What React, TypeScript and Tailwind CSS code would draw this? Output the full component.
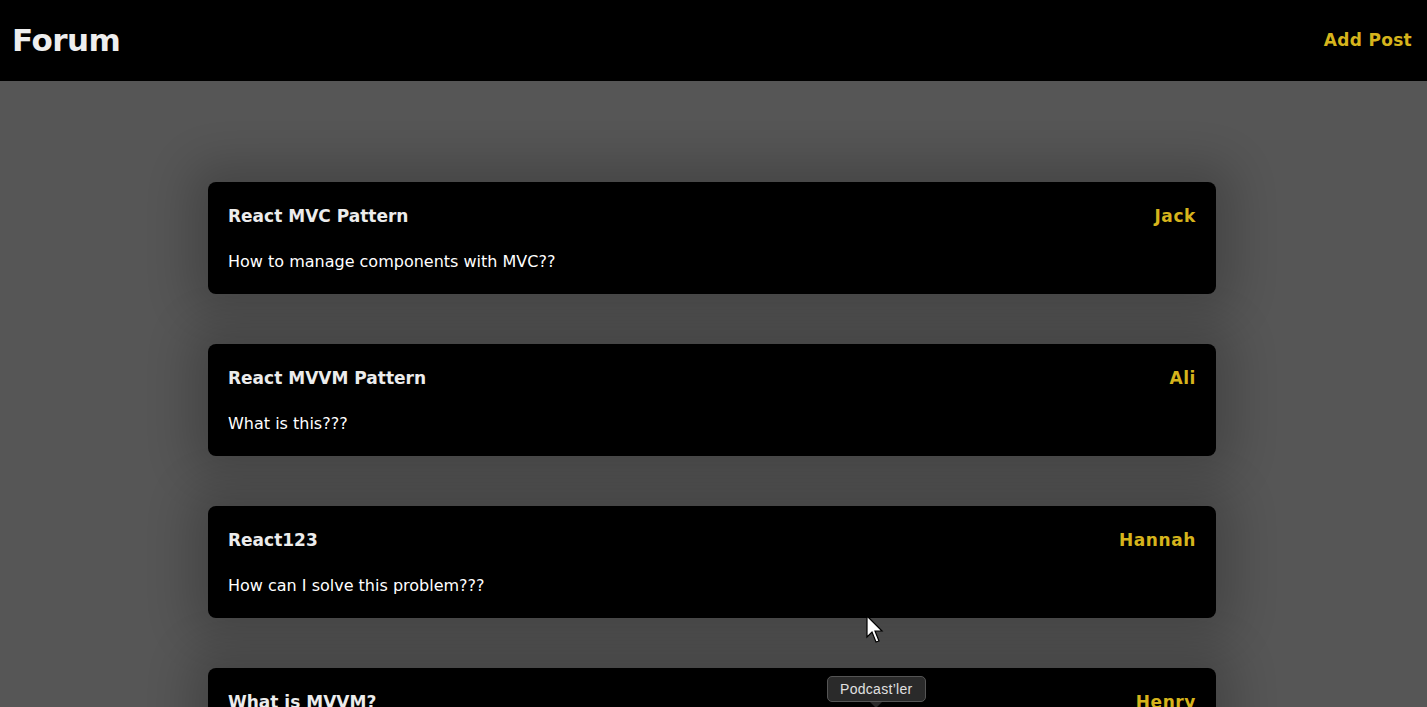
import React from "react";

const posts = [
  { title: "React MVC Pattern", author: "Jack", body: "How to manage components with MVC??" },
  { title: "React MVVM Pattern", author: "Ali", body: "What is this???" },
  { title: "React123", author: "Hannah", body: "How can I solve this problem???" },
  { title: "What is MVVM?", author: "Henry", body: "Model View ViewModel" },
];

function PostCard({ title, author, body }: { title: string; author: string; body: string }) {
  return (
    <div className="bg-black rounded-lg px-5 pt-[21px] pb-5 shadow-[0_0_45px_18px_rgba(0,0,0,0.2)]">
      <div className="flex items-center justify-between">
        <h2 className="text-[17px] leading-[26px] font-bold text-[#ececec] font-['DejaVu_Sans',sans-serif]">{title}</h2>
        <span className="text-[17px] leading-[26px] font-semibold text-[#d6b41c] font-['DejaVu_Sans',sans-serif] tracking-[0.6px]">{author}</span>
      </div>
      <p className="mt-[21px] text-[16px] leading-6 text-white font-['DejaVu_Sans',sans-serif]">{body}</p>
    </div>
  );
}

export default function App() {
  return (
    <div className="h-screen overflow-hidden bg-[#565656] relative">
      <header className="h-[81px] bg-black flex items-center justify-between pl-3 pr-[15px]">
        <h1 className="text-[31px] font-bold text-[#eeeeee] font-['DejaVu_Sans',sans-serif] tracking-[-0.5px]">Forum</h1>
        <button className="text-[17px] font-semibold text-[#d6b41c] font-['DejaVu_Sans',sans-serif] tracking-[0.3px]">Add Post</button>
      </header>
      <main className="w-[1008px] ml-[208px] pt-[101px] flex flex-col gap-[50px]">
        {posts.map((p) => (
          <PostCard key={p.title} {...p} />
        ))}
      </main>

      {/* cursor */}
      <svg className="absolute left-[866px] top-[615px]" width="20" height="30" viewBox="0 0 20 30">
        <path d="M1 1 L1 22 L6 17 L10 27 L13 26 L9 16 L16 16 Z" fill="white" stroke="black" strokeWidth="1.2" />
      </svg>

      {/* dock tooltip */}
      <div className="absolute left-[827px] top-[676px]">
        <div className="bg-[#2a2a2a] border border-[#555] rounded-[5px] px-3 h-[26px] flex items-center text-[14px] text-[#e0e0e0] font-['Liberation_Sans',sans-serif] tracking-[0.3px]">
          Podcast’ler
        </div>
        <div className="mx-auto w-0 h-0 border-l-[6px] border-r-[6px] border-t-[6px] border-l-transparent border-r-transparent border-t-[#2a2a2a]" />
      </div>
    </div>
  );
}
